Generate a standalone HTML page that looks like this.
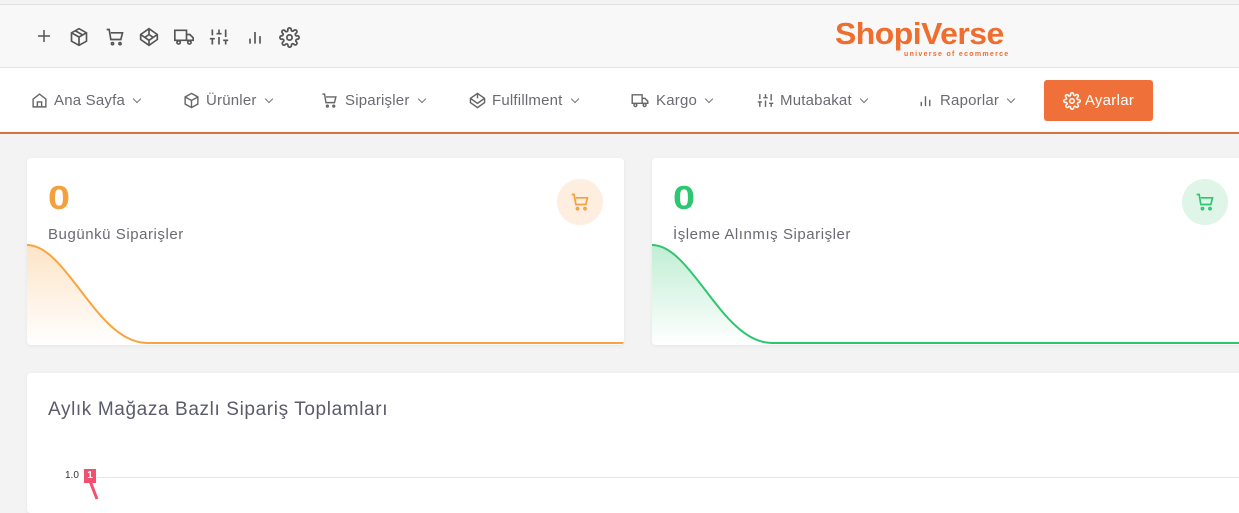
<!DOCTYPE html>
<html><head><meta charset="utf-8"><style>
*{box-sizing:border-box;margin:0;padding:0}
body{width:1239px;height:500px;overflow:hidden;background:#f3f3f4;font-family:"Liberation Sans",sans-serif;position:relative}
.top{position:absolute;left:0;top:4px;width:1239px;height:64px;background:#f8f8f8;border-top:1px solid #e2e2e2;border-bottom:1px solid #e4e4e4}
.ti{position:absolute;top:22px}
.nav{position:absolute;left:0;top:68px;width:1239px;height:66px;background:#fff;border-bottom:2px solid #d9743a}
.ni{position:absolute;top:24px;font-size:15px;color:#6a6a72;display:flex;align-items:center;gap:6px;white-space:nowrap;letter-spacing:0.2px}
.ch{width:6px;height:6px;border-right:1.5px solid #777;border-bottom:1.5px solid #777;transform:rotate(45deg);margin:-4px 0 0 3px}
.btn{position:absolute;left:1044px;top:12px;width:109px;height:41px;background:#ef7139;border-radius:3px;color:#fff;font-size:15px;display:flex;align-items:center;justify-content:center;gap:4px;letter-spacing:0.3px}
.card{position:absolute;background:#fff;border-radius:4px;box-shadow:0 1px 4px rgba(0,0,0,.06);overflow:hidden}
.num{position:absolute;left:21px;top:21px;font-size:33px;font-weight:bold;transform:scaleX(1.2);transform-origin:left}
.lbl{position:absolute;left:21px;top:68px;font-size:15px;color:#6a6a72;letter-spacing:0.55px}
.ic{position:absolute;top:21px;width:46px;height:46px;border-radius:50%;display:flex;align-items:center;justify-content:center}
svg{display:block}
</style></head><body>
<div class="top">
<svg class="ti" style="left:35px" width="18" height="18" viewBox="0 0 24 24" fill="none" stroke="#555" stroke-width="2"><path d="M12 4v16M4 12h16"/></svg>
<svg class="ti" style="left:69px" width="20" height="20" viewBox="0 0 24 24" fill="none" stroke="#555" stroke-width="2"><path d="M12 2l9 5v10l-9 5-9-5V7zM3 7l9 5 9-5M12 12v10M7.5 4.5l9 5"/></svg>
<svg class="ti" style="left:104px" width="22" height="20" viewBox="0 0 24 24" fill="none" stroke="#555" stroke-width="2"><path d="M2 3h3l2 12h12l2-8H7"/><circle cx="9" cy="20" r="1.3"/><circle cx="18" cy="20" r="1.3"/></svg>
<svg class="ti" style="left:139px" width="20" height="20" viewBox="0 0 24 24" fill="none" stroke="#555" stroke-width="2"><path d="M12 2l10 7v6l-10 7-10-7V9zM2 9l10 7 10-7M12 2v7l-5 3.5M12 9l5 3.5M12 22v-6"/></svg>
<svg class="ti" style="left:172px" width="24" height="20" viewBox="0 0 24 24" fill="none" stroke="#555" stroke-width="2"><path d="M1 4h14v12H1zM15 9h4l4 4v3h-8"/><circle cx="5.5" cy="18.5" r="2"/><circle cx="18.5" cy="18.5" r="2"/></svg>
<svg class="ti" style="left:209px" width="20" height="20" viewBox="0 0 24 24" fill="none" stroke="#555" stroke-width="2"><path d="M4 21v-7M4 10V3M12 21v-9M12 8V3M20 21v-5M20 12V3M1 14h6M9 8h6M17 16h6"/></svg>
<svg class="ti" style="left:245px" width="20" height="20" viewBox="0 0 24 24" fill="none" stroke="#555" stroke-width="2"><path d="M6 20v-6M12 20V6M18 20v-9"/></svg>
<svg class="ti" style="left:279px" width="21" height="21" viewBox="0 0 24 24" fill="none" stroke="#555" stroke-width="2"><circle cx="12" cy="12" r="3"/><path d="M19.4 15a1.6 1.6 0 0 0 .3 1.8l.1.1a2 2 0 1 1-2.8 2.8l-.1-.1a1.6 1.6 0 0 0-2.7 1.1V21a2 2 0 1 1-4 0v-.1a1.6 1.6 0 0 0-2.8-1.1l-.1.1a2 2 0 1 1-2.8-2.8l.1-.1A1.6 1.6 0 0 0 3.1 14H3a2 2 0 1 1 0-4h.1a1.6 1.6 0 0 0 1.1-2.8l-.1-.1a2 2 0 1 1 2.8-2.8l.1.1A1.6 1.6 0 0 0 10 3.1V3a2 2 0 1 1 4 0v.1a1.6 1.6 0 0 0 2.8 1.1l.1-.1a2 2 0 1 1 2.8 2.8l-.1.1A1.6 1.6 0 0 0 20.9 10H21a2 2 0 1 1 0 4h-.1a1.6 1.6 0 0 0-1.5 1z"/></svg>
<div style="position:absolute;left:835px;top:11px;font-size:31px;font-weight:bold;color:#ef6d2d;letter-spacing:-0.5px;transform:scaleX(1.03);transform-origin:left">ShopiVerse</div>
<div style="position:absolute;left:904px;top:46px;font-size:7px;font-weight:bold;color:#ef6d2d;letter-spacing:1.3px">universe of ecommerce</div>
</div>
<div class="nav">
<div class="ni" style="left:31px"><svg width="17" height="17" viewBox="0 0 24 24" fill="none" stroke="#666" stroke-width="2"><path d="M3 10l9-7 9 7v11H3zM9 21v-7h6v7"/></svg>Ana Sayfa<span class="ch"></span></div>
<div class="ni" style="left:183px"><svg width="17" height="17" viewBox="0 0 24 24" fill="none" stroke="#666" stroke-width="2"><path d="M12 2l9 5v10l-9 5-9-5V7zM3 7l9 5 9-5M12 12v10"/></svg>Ürünler<span class="ch"></span></div>
<div class="ni" style="left:320px"><svg width="19" height="17" viewBox="0 0 24 24" fill="none" stroke="#666" stroke-width="2"><path d="M2 3h3l2 12h12l2-8H7"/><circle cx="9" cy="20" r="1.3"/><circle cx="18" cy="20" r="1.3"/></svg>Siparişler<span class="ch"></span></div>
<div class="ni" style="left:469px"><svg width="17" height="17" viewBox="0 0 24 24" fill="none" stroke="#666" stroke-width="2"><path d="M12 2l10 7v6l-10 7-10-7V9zM2 9l10 7 10-7M12 2v7"/></svg>Fulfillment<span class="ch"></span></div>
<div class="ni" style="left:630px"><svg width="20" height="17" viewBox="0 0 24 24" fill="none" stroke="#666" stroke-width="2"><path d="M1 4h14v12H1zM15 9h4l4 4v3h-8"/><circle cx="5.5" cy="18.5" r="2"/><circle cx="18.5" cy="18.5" r="2"/></svg>Kargo<span class="ch"></span></div>
<div class="ni" style="left:757px"><svg width="17" height="17" viewBox="0 0 24 24" fill="none" stroke="#666" stroke-width="2"><path d="M4 21v-7M4 10V3M12 21v-9M12 8V3M20 21v-5M20 12V3M1 14h6M9 8h6M17 16h6"/></svg>Mutabakat<span class="ch"></span></div>
<div class="ni" style="left:917px"><svg width="17" height="17" viewBox="0 0 24 24" fill="none" stroke="#666" stroke-width="2"><path d="M6 20v-6M12 20V6M18 20v-9"/></svg>Raporlar<span class="ch"></span></div>
<div class="btn"><svg width="18" height="18" viewBox="0 0 24 24" fill="none" stroke="#fff" stroke-width="2"><circle cx="12" cy="12" r="3"/><path d="M19.4 15a1.6 1.6 0 0 0 .3 1.8l.1.1a2 2 0 1 1-2.8 2.8l-.1-.1a1.6 1.6 0 0 0-2.7 1.1V21a2 2 0 1 1-4 0v-.1a1.6 1.6 0 0 0-2.8-1.1l-.1.1a2 2 0 1 1-2.8-2.8l.1-.1A1.6 1.6 0 0 0 3.1 14H3a2 2 0 1 1 0-4h.1a1.6 1.6 0 0 0 1.1-2.8l-.1-.1a2 2 0 1 1 2.8-2.8l.1.1A1.6 1.6 0 0 0 10 3.1V3a2 2 0 1 1 4 0v.1a1.6 1.6 0 0 0 2.8 1.1l.1-.1a2 2 0 1 1 2.8 2.8l-.1.1A1.6 1.6 0 0 0 20.9 10H21a2 2 0 1 1 0 4h-.1a1.6 1.6 0 0 0-1.5 1z"/></svg>Ayarlar</div>
</div>
<div class="card" style="left:27px;top:158px;width:597px;height:187px">
<div class="num" style="color:#f4a13d">0</div><div class="lbl">Bugünkü Siparişler</div>
<div class="ic" style="left:530px;background:#fdeedf"><svg width="22" height="20" viewBox="0 0 24 24" fill="none" stroke="#f4a13d" stroke-width="2"><path d="M2 3h3l2 12h12l2-8H7"/><circle cx="9" cy="20" r="1.3"/><circle cx="18" cy="20" r="1.3"/></svg></div>
<svg style="position:absolute;left:0;top:85px" width="597" height="102"><defs><linearGradient id="a" x1="0" y1="0" x2="0" y2="1"><stop offset="0" stop-color="#f8a440" stop-opacity=".3"/><stop offset="1" stop-color="#f8a440" stop-opacity="0"/></linearGradient></defs><path d="M0 2C40 2 70 100 120 100H597V102H0z" fill="url(#a)"/><path d="M0 2C40 2 70 100 120 100H597" fill="none" stroke="#f8a440" stroke-width="2"/></svg>
</div>
<div class="card" style="left:652px;top:158px;width:600px;height:187px">
<div class="num" style="color:#2ec66f">0</div><div class="lbl">İşleme Alınmış Siparişler</div>
<div class="ic" style="left:530px;background:#dff5e8"><svg width="22" height="20" viewBox="0 0 24 24" fill="none" stroke="#2ec66f" stroke-width="2"><path d="M2 3h3l2 12h12l2-8H7"/><circle cx="9" cy="20" r="1.3"/><circle cx="18" cy="20" r="1.3"/></svg></div>
<svg style="position:absolute;left:0;top:85px" width="600" height="102"><defs><linearGradient id="b" x1="0" y1="0" x2="0" y2="1"><stop offset="0" stop-color="#2ec66f" stop-opacity=".3"/><stop offset="1" stop-color="#2ec66f" stop-opacity="0"/></linearGradient></defs><path d="M0 2C40 2 70 100 120 100H600V102H0z" fill="url(#b)"/><path d="M0 2C40 2 70 100 120 100H600" fill="none" stroke="#2ec66f" stroke-width="2"/></svg>
</div>
<div class="card" style="left:27px;top:373px;width:1225px;height:140px">
<div style="position:absolute;left:21px;top:26px;font-size:19px;color:#5b5b6b;letter-spacing:0.62px">Aylık Mağaza Bazlı Sipariş Toplamları</div>
<div style="position:absolute;left:38px;top:97px;font-size:10px;color:#333">1.0</div>
<div style="position:absolute;left:70px;top:104px;width:1160px;height:1px;background:#e6e6e6"></div>
<div style="position:absolute;left:57px;top:96px;width:12px;height:14px;background:#f1516e;color:#fff;font-size:10px;font-weight:bold;text-align:center;line-height:14px">1</div>
<svg style="position:absolute;left:60px;top:108px" width="20" height="20"><path d="M3 0L10 18" stroke="#f1516e" stroke-width="3"/></svg>
</div>
</body></html>
